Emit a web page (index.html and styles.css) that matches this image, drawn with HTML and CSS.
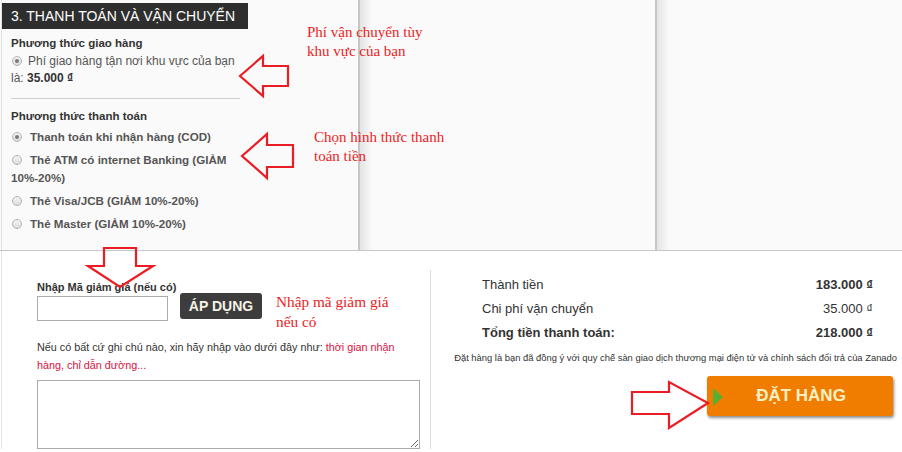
FILE: index.html
```html
<!DOCTYPE html>
<html lang="vi">
<head>
<meta charset="utf-8">
<title>Thanh toán và vận chuyển</title>
<link rel="stylesheet" href="styles.css">
</head>
<body>
<div class="page">
  <div class="top">
    <section class="col-main">
      <h2 class="title">3. THANH TOÁN VÀ VẬN CHUYỂN</h2>
      <div class="group">
        <h3 class="label">Phương thức giao hàng</h3>
        <p class="ship"><span class="radio checked"></span>Phí giao hàng tận nơi khu vực của bạn là: <b>35.000 ₫</b></p>
        <hr class="sep">
        <h3 class="label label-pay">Phương thức thanh toán</h3>
        <ul class="options">
          <li><span class="radio checked"></span>Thanh toán khi nhận hàng (COD)</li>
          <li><span class="radio"></span>Thẻ ATM có internet Banking (GIẢM 10%-20%)</li>
          <li><span class="radio"></span>Thẻ Visa/JCB (GIẢM 10%-20%)</li>
          <li><span class="radio"></span>Thẻ Master (GIẢM 10%-20%)</li>
        </ul>
      </div>
    </section>
    <div class="col-mid"></div>
    <div class="col-right"></div>
  </div>
  <div class="bottom">
    <div class="notes">
      <label class="label">Nhập Mã giảm giá (nếu có)</label>
      <div class="coupon">
        <input class="coupon-input" type="text">
        <button class="btn-apply">ÁP DỤNG</button>
      </div>
      <p class="hint">Nếu có bất cứ ghi chú nào, xin hãy nhập vào dưới đây như: <span class="hint-red">thời gian nhận hàng, chỉ dẫn đường...</span></p>
      <textarea class="memo"></textarea>
    </div>
    <div class="summary">
      <div class="row"><span>Thành tiền</span><b>183.000 ₫</b></div>
      <div class="row"><span>Chi phí vận chuyển</span><span>35.000 ₫</span></div>
      <div class="row total"><span>Tổng tiền thanh toán:</span><span>218.000 ₫</span></div>
      <p class="terms">Đặt hàng là bạn đã đồng ý với quy chế sàn giao dịch thương mại điện tử và chính sách đổi trả của Zanado</p>
      <div class="order-wrap">
        <button class="btn-order"><span class="play"></span>ĐẶT HÀNG</button>
      </div>
    </div>
  </div>

  <svg class="marks" width="902" height="452" viewBox="0 0 902 452">
    <polygon points="240,76 263,56 263,66 288,66 288,86 263,86 263,96"/>
    <polygon points="242,156 267,134 267,145 293,145 293,167 267,167 267,178"/>
    <polygon points="104,248 136,248 136,266 153,266 120,287 88,266 104,266"/>
    <polygon points="632,392 669,392 669,382 708,403 669,428 669,414 632,414"/>
  </svg>
  <p class="note note-ship">Phí vận chuyển tùy<br>khu vực của bạn</p>
  <p class="note note-pay">Chọn hình thức thanh<br>toán tiền</p>
  <p class="note note-code">Nhập mã giảm giá<br>nếu có</p>
</div>
</body>
</html>
```
FILE: styles.css
```css
* { box-sizing: border-box; }
html, body { margin: 0; padding: 0; background: #fff; }
body { font-family: "Liberation Sans", Arial, sans-serif; color: #333; }

.page {
  position: relative;
  width: 902px;
  height: 452px;
  overflow: hidden;
}

.top {
  display: flex;
  height: 251px;
  background: #fafafa;
  border-bottom: 1px solid #c8c8c8;
}
.col-main {
  width: 357px;
  margin-left: 1px;
  border-left: 1px solid #e2e2e2;
}
.col-mid, .col-right {
  border-left: 2px solid #c6c6c6;
  background: linear-gradient(to right, #e4e4e4, #fafafa 12px);
}
.col-mid { width: 297px; }
.col-right { flex: 1; }

.title {
  display: inline-block;
  width: 246px;
  height: 26px;
  margin: 3px 0 0;
  padding-left: 9px;
  background: #2e2e2e;
  color: #fff;
  font-size: 14px;
  font-weight: normal;
  line-height: 26px;
}

.group { width: 240px; padding-left: 9px; }

.label {
  display: block;
  margin: 6px 0 0;
  font-size: 11.5px;
  font-weight: bold;
  line-height: 16px;
  color: #333;
}
.ship {
  margin: 2px 0 0;
  width: 228px;
  font-size: 12px;
  line-height: 17px;
  color: #555;
}
.ship b { color: #333; }

.sep {
  margin: 11px 0 0;
  border: 0;
  border-top: 1px solid #cfcfcf;
  width: 229px;
}
.label-pay { margin-top: 9px; }

.options { list-style: none; margin: 4px 0 0; padding: 0; }
.options li {
  font-size: 11.6px;
  font-weight: bold;
  line-height: 18px;
  color: #555;
  margin-bottom: 5px;
  width: 231px;
}

.radio {
  display: inline-block;
  position: relative;
  width: 10px;
  height: 10px;
  margin: 0 8px 0 1px;
  border: 1px solid #b4b4b4;
  border-radius: 50%;
  background: linear-gradient(#f4f4f4, #dcdcdc);
  vertical-align: -1px;
}
.ship .radio { margin-right: 6px; }
.radio.checked::after {
  content: "";
  position: absolute;
  left: 2px; top: 2px;
  width: 4px; height: 4px;
  border-radius: 50%;
  background: #7a7a7a;
}

.bottom { display: flex; }
.notes {
  width: 429px;
  padding: 28px 0 0 35px;
  border-left: 1px solid #e6e6e6;
  margin-left: 1px;
}
.notes .label { margin: 0; font-size: 11px; }
.coupon { display: flex; align-items: flex-start; gap: 12px; margin-top: -2px; }
.coupon-input {
  width: 131px;
  height: 25px;
  margin: 3px 0 0;
  border: 1px solid #ababab;
  background: #fff;
}
.btn-apply {
  width: 82px;
  height: 26px;
  border: 0;
  border-radius: 3px;
  background: #3d3d3d;
  color: #f6f3e6;
  font-family: "Liberation Sans", Arial, sans-serif;
  font-size: 14px;
  font-weight: bold;
  padding: 0;
}
.hint {
  margin: 17px 0 0;
  width: 360px;
  font-size: 10.8px;
  line-height: 18px;
  color: #333;
}
.hint-red { color: #d8123f; }
.memo {
  display: block;
  width: 383px;
  height: 69px;
  margin-top: 6px;
  border: 1px solid #ababab;
  resize: both;
}

.summary {
  flex: 1;
  margin-top: 19px;
  border-left: 1px solid #dcdcdc;
  padding: 3px 0 0;
}
.row {
  display: flex;
  justify-content: space-between;
  padding: 0 29px 0 51px;
  font-size: 13px;
  line-height: 24px;
  color: #333;
}
.row.total { font-weight: bold; }
.terms {
  margin: 6px 0 0;
  padding-right: 5px;
  text-align: right;
  font-size: 9.4px;
  line-height: 14px;
  color: #333;
}
.order-wrap { display: flex; justify-content: flex-end; padding-right: 9px; margin-top: 11px; }
.btn-order {
  position: relative;
  width: 186px;
  height: 40px;
  border: 0;
  border-radius: 3px;
  background: #f07d00;
  box-shadow: 1px 2px 3px rgba(0,0,0,0.45);
  color: #fcf0c4;
  font-family: "Liberation Sans", Arial, sans-serif;
  font-size: 17px;
  font-weight: bold;
  padding: 0 0 0 2px;
}
.play {
  position: absolute;
  left: 6px;
  top: 12px;
  width: 0; height: 0;
  border-top: 9px solid transparent;
  border-bottom: 9px solid transparent;
  border-left: 10px solid #5cae2e;
}

.marks {
  position: absolute;
  left: 0; top: 0;
  pointer-events: none;
}
.marks polygon { fill: none; stroke: #ec1c24; stroke-width: 2.2; }

.note {
  position: absolute;
  margin: 0;
  font-family: "Liberation Serif", "Times New Roman", serif;
  font-size: 15px;
  line-height: 19px;
  color: #ec1c24;
}
.note-ship { left: 307px; top: 23px; }
.note-pay { left: 314px; top: 128px; }
.note-code { left: 276px; top: 292px; font-size: 15.3px; line-height: 20px; }
```
